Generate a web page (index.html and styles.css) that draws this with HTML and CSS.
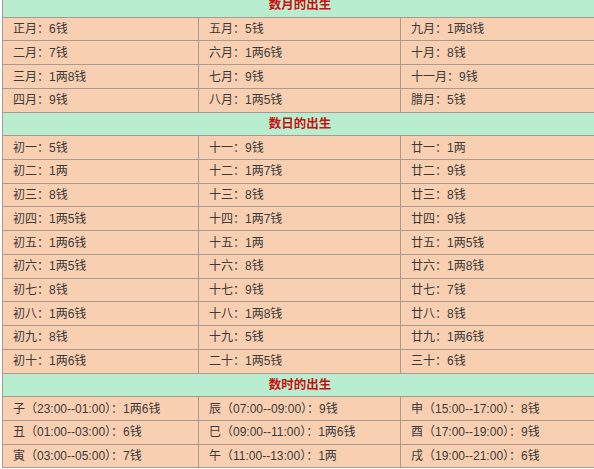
FILE: index.html
```html
<!DOCTYPE html>
<html lang="zh">
<head>
<meta charset="utf-8">
<title>称骨</title>
<link rel="stylesheet" href="styles.css">
</head>
<body>
<table class="bone">
<colgroup><col class="c1"><col class="c2"><col class="c3"></colgroup>
<tr class="head"><td colspan="3">数月的出生</td></tr>
<tr><td>正月：6钱</td><td>五月：5钱</td><td>九月：1两8钱</td></tr>
<tr><td>二月：7钱</td><td>六月：1两6钱</td><td>十月：8钱</td></tr>
<tr><td>三月：1两8钱</td><td>七月：9钱</td><td>十一月：9钱</td></tr>
<tr><td>四月：9钱</td><td>八月：1两5钱</td><td>腊月：5钱</td></tr>
<tr class="head"><td colspan="3">数日的出生</td></tr>
<tr><td>初一：5钱</td><td>十一：9钱</td><td>廿一：1两</td></tr>
<tr><td>初二：1两</td><td>十二：1两7钱</td><td>廿二：9钱</td></tr>
<tr><td>初三：8钱</td><td>十三：8钱</td><td>廿三：8钱</td></tr>
<tr><td>初四：1两5钱</td><td>十四：1两7钱</td><td>廿四：9钱</td></tr>
<tr><td>初五：1两6钱</td><td>十五：1两</td><td>廿五：1两5钱</td></tr>
<tr><td>初六：1两5钱</td><td>十六：8钱</td><td>廿六：1两8钱</td></tr>
<tr><td>初七：8钱</td><td>十七：9钱</td><td>廿七：7钱</td></tr>
<tr><td>初八：1两6钱</td><td>十八：1两8钱</td><td>廿八：8钱</td></tr>
<tr><td>初九：8钱</td><td>十九：5钱</td><td>廿九：1两6钱</td></tr>
<tr><td>初十：1两6钱</td><td>二十：1两5钱</td><td>三十：6钱</td></tr>
<tr class="head"><td colspan="3">数时的出生</td></tr>
<tr><td>子（23:00--01:00）：1两6钱</td><td>辰（07:00--09:00）：9钱</td><td>申（15:00--17:00）：8钱</td></tr>
<tr><td>丑（01:00--03:00）：6钱</td><td>巳（09:00--11:00）：1两6钱</td><td>酉（17:00--19:00）：9钱</td></tr>
<tr><td>寅（03:00--05:00）：7钱</td><td>午（11:00--13:00）：1两</td><td>戌（19:00--21:00）：6钱</td></tr>
</table>
</body>
</html>
```

FILE: styles.css
```css
html, body {
  margin: 0;
  padding: 0;
  background: #ffffff;
  overflow: hidden;
}

.bone {
  border-collapse: collapse;
  table-layout: fixed;
  width: 595px;
  margin: -7px 0 0 2px;
  font-family: "Liberation Sans", "Noto Sans CJK SC", sans-serif;
  font-size: 12px;
  color: #3a3a3a;
}

.c1 { width: 196px; }
.c2 { width: 202px; }
.c3 { width: 197px; }

.bone tr {
  height: 23.72px;
}

.bone td {
  border: 1px solid #a89a8e;
  background: #f9cfb1;
  padding: 0 0 0 10px;
  white-space: nowrap;
  line-height: 14px;
}

.bone .head td {
  background: #b9edd0;
  color: #c8100f;
  font-weight: bold;
  text-align: center;
  padding: 0;
  font-size: 12.5px;
}
```
